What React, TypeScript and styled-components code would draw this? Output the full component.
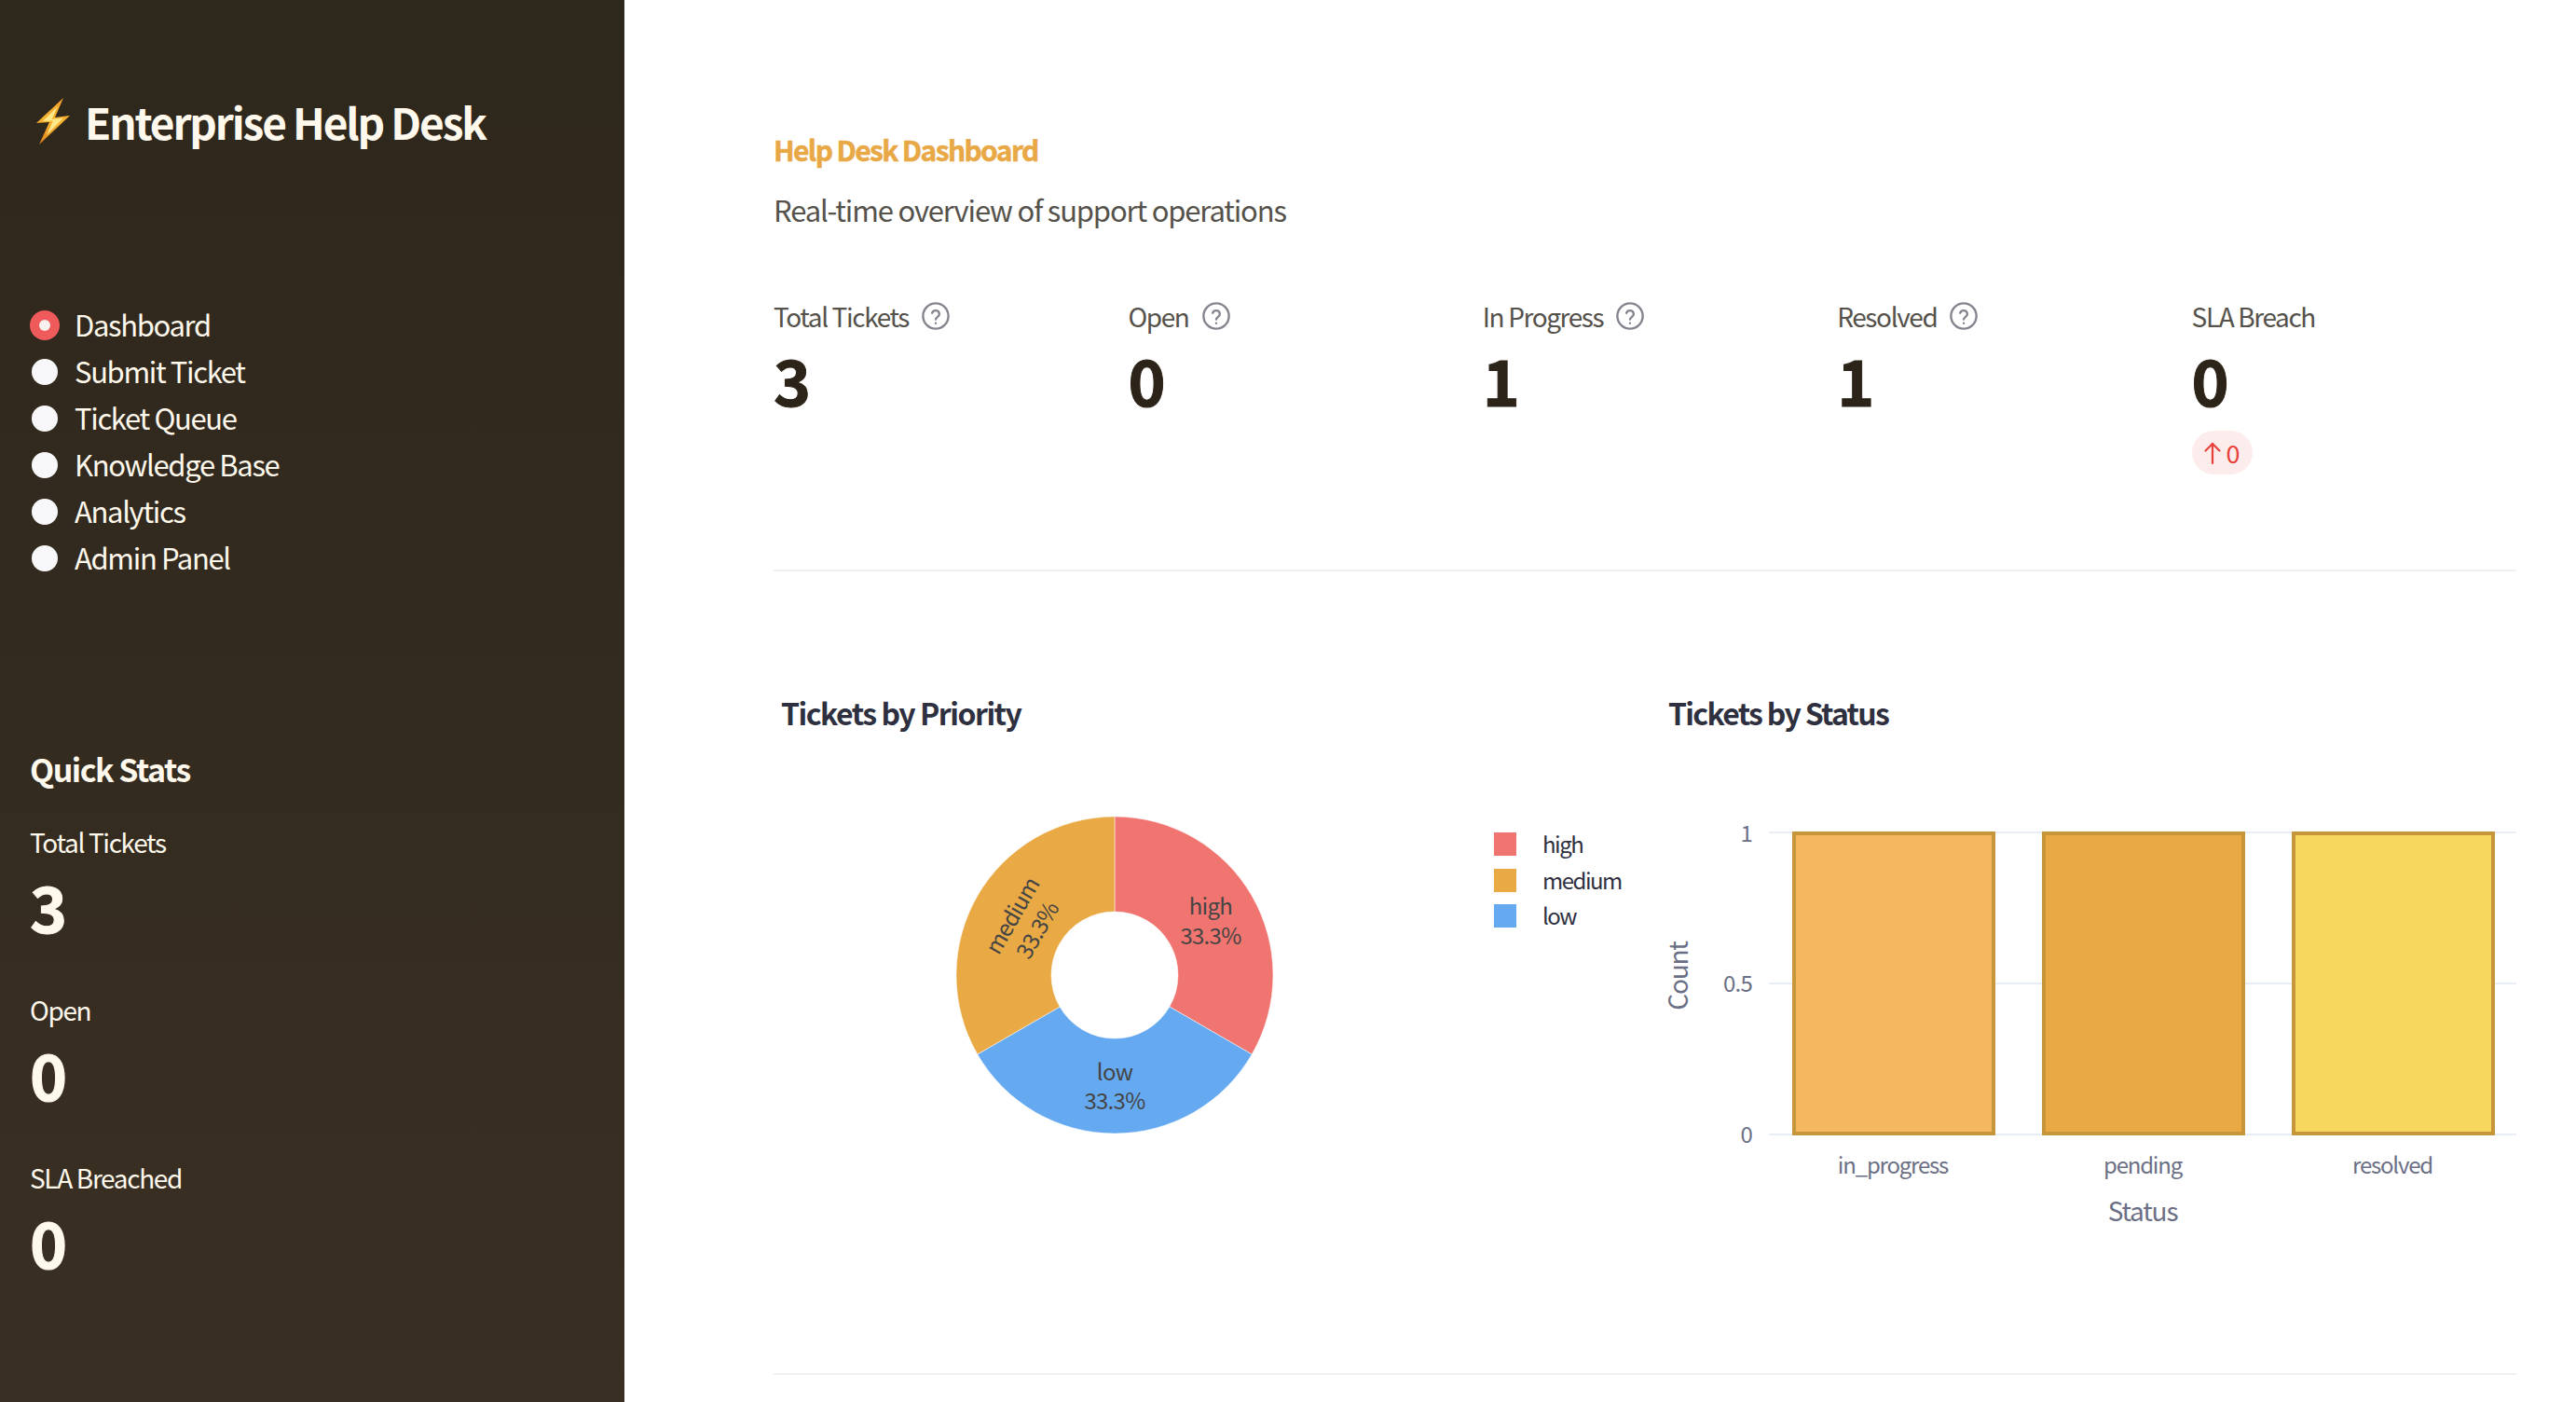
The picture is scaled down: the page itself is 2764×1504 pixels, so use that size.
import styled, { createGlobalStyle } from "styled-components";

const FONT = `"Noto Sans CJK JP", "Noto Sans", sans-serif`;

const GlobalStyle = createGlobalStyle`
  html, body {
    margin: 0;
    padding: 0;
    background: #fff;
    font-family: ${FONT};
  }
  * {
    box-sizing: border-box;
  }
`;

const Page = styled.div`
  display: flex;
  width: 2764px;
  height: 1504px;
  overflow: hidden;
`;

const Sidebar = styled.aside`
  display: flex;
  flex-direction: column;
  flex: 0 0 670px;
  height: 100%;
  padding: 0 32px;
  background: linear-gradient(180deg, #2e271c 0%, #3a2f23 100%);
  color: #fff8ec;
`;

const Brand = styled.div`
  display: flex;
  align-items: center;
  gap: 15px;
  height: 60px;
  margin: 100px 0 0 6px;
`;

const BrandTitle = styled.h1`
  margin: 0;
  font-size: 46px;
  line-height: 60px;
  font-weight: 700;
  letter-spacing: -2.15px;
`;

const NavList = styled.div`
  display: flex;
  flex-direction: column;
  margin-top: 162px;
`;

const NavItem = styled.div`
  display: flex;
  align-items: center;
  height: 50px;
  gap: 16px;
  font-size: 31px;
  letter-spacing: -1.35px;
`;

const Radio = styled.span<{ $active?: boolean }>`
  display: flex;
  align-items: center;
  justify-content: center;
  width: 32px;
  height: 32px;
  margin-top: 4px;
  border-radius: 50%;
  background: ${(p) => (p.$active ? "#ef5b5b" : "#f8f8fb")};
  ${(p) => (p.$active ? "" : "border: 2px solid #332b1f;")}
  &::after {
    content: "";
    display: ${(p) => (p.$active ? "block" : "none")};
    width: 12px;
    height: 12px;
    border-radius: 50%;
    background: #f8f0ec;
  }
`;

const QuickTitle = styled.h2`
  margin: 178px 0 31px;
  font-size: 34px;
  line-height: 50px;
  font-weight: 700;
  letter-spacing: -1.5px;
`;

const QuickStat = styled.div`
  display: flex;
  flex-direction: column;
  height: 180px;
`;

const QuickLabel = styled.div`
  font-size: 28px;
  line-height: 44px;
  letter-spacing: -1.35px;
`;

const QuickValue = styled.div`
  font-size: 68px;
  line-height: 92px;
  font-weight: 700;
  margin-top: 1px;
  -webkit-text-stroke: 1px #fff8ec;
`;

const Main = styled.main`
  display: flex;
  flex-direction: column;
  flex: 1;
  padding: 0 64px 0 160px;
  min-width: 0;
`;

const PageTitle = styled.h1`
  margin: 0;
  margin-top: 138px;
  font-size: 30px;
  line-height: 44px;
  font-weight: 700;
  color: #e8a845;
  letter-spacing: -1.65px;
  -webkit-text-stroke: 0.5px #e8a845;
`;

const Subtitle = styled.p`
  margin: 21px 0 0;
  font-size: 31px;
  line-height: 44px;
  color: #55514b;
  letter-spacing: -1.17px;
`;

const Metrics = styled.div`
  display: grid;
  grid-template-columns: repeat(5, 1fr);
  gap: 32px;
  margin-top: 70px;
  height: 294px;
`;

const Metric = styled.div`
  display: flex;
  flex-direction: column;
  align-items: flex-start;
`;

const MetricLabel = styled.div`
  display: flex;
  align-items: center;
  gap: 14px;
  height: 44px;
  font-size: 28px;
  color: #55514b;
  letter-spacing: -1.4px;
`;

const MetricValue = styled.div`
  font-size: 68px;
  line-height: 92px;
  font-weight: 700;
  color: #2d2419;
  -webkit-text-stroke: 1px #2d2419;
`;

const Delta = styled.div`
  display: flex;
  align-items: center;
  gap: 5px;
  height: 47px;
  padding: 0 13px 0 12px;
  margin-top: 9px;
  border-radius: 24px;
  background: #fdecec;
  color: #e8403a;
  font-size: 27px;
`;

const Divider = styled.hr`
  width: 100%;
  height: 2px;
  margin: 0;
  border: 0;
  background: #f0f0f0;
`;

const Charts = styled.div`
  display: grid;
  grid-template-columns: 1fr 1fr;
  gap: 32px;
  height: 860px;
`;

const ChartSvg = styled.svg`
  display: block;
  width: 919px;
  height: 860px;
  overflow: visible;
  font-family: ${FONT};
`;

const HelpIcon = () => (
  <svg width="30" height="30" viewBox="0 0 24 24" fill="none" stroke="#85858f" strokeWidth="1.9" strokeLinecap="round" strokeLinejoin="round">
    <circle cx="12" cy="12" r="10.9" />
    <path d="M8.9 9.4a3.2 3.2 0 0 1 6.2 1c0 2.1-3.1 2.7-3.1 4.4" />
    <path d="M12 18.2h.01" />
  </svg>
);

const BoltIcon = () => (
  <svg width="38" height="52" viewBox="0 0 38 52">
    <defs>
      <linearGradient id="bolt" x1="0.6" y1="0" x2="0.3" y2="1">
        <stop offset="0" stopColor="#f3a02a" />
        <stop offset="0.5" stopColor="#f8b431" />
        <stop offset="1" stopColor="#e2861c" />
      </linearGradient>
    </defs>
    <path d="M30 1 L1 28 L15 27 L4 51 L37 20 L21 22 Z" fill="url(#bolt)" />
    <path d="M24 10 L8 26 L19 25.5 L12 41 L30 22.5 L17.5 24 Z" fill="#ffe88a" />
  </svg>
);

const ArrowUp = () => (
  <svg width="20" height="26" viewBox="0 0 20 26" fill="none" stroke="#e8403a" strokeWidth="2.2" strokeLinecap="round" strokeLinejoin="round">
    <path d="M10 24V3" />
    <path d="M2.5 10.5L10 3l7.5 7.5" />
  </svg>
);

const navItems = ["Dashboard", "Submit Ticket", "Ticket Queue", "Knowledge Base", "Analytics", "Admin Panel"];
const quickStats = [
  { label: "Total Tickets", value: 3 },
  { label: "Open", value: 0 },
  { label: "SLA Breached", value: 0 },
];
const metrics = [
  { label: "Total Tickets", value: 3, help: true },
  { label: "Open", value: 0, help: true },
  { label: "In Progress", value: 1, help: true },
  { label: "Resolved", value: 1, help: true },
  { label: "SLA Breach", value: 0, help: false },
];

// chart coords are relative to the svg: x - 830 / x - 1781, y - 614
const CX = 366;
const CY = 433;
const R = 170;
const HOLE = 68;

function slicePath(from: number, to: number) {
  const pt = (r: number, a: number) => {
    const rad = (a * Math.PI) / 180;
    return `${(CX + r * Math.sin(rad)).toFixed(2)} ${(CY - r * Math.cos(rad)).toFixed(2)}`;
  };
  return `M${pt(R, from)} A${R} ${R} 0 0 1 ${pt(R, to)} L${pt(HOLE, to)} A${HOLE} ${HOLE} 0 0 0 ${pt(HOLE, from)} Z`;
}

const slices = [
  { name: "high", from: 0, to: 120, color: "#f07470" },
  { name: "low", from: 120, to: 240, color: "#65a9f0" },
  { name: "medium", from: 240, to: 360, color: "#e9a945" },
];

const legend = [
  { name: "high", color: "#f07470", y: 280 },
  { name: "medium", color: "#e9a945", y: 319 },
  { name: "low", color: "#65a9f0", y: 357 },
];

function PieChart() {
  return (
    <ChartSvg viewBox="0 0 919 860">
      <text x="8" y="165" fontSize="32" fontWeight="700" fill="#2e3040" letterSpacing="-1.5">Tickets by Priority</text>
      {slices.map((s) => (
        <path key={s.name} d={slicePath(s.from, s.to)} fill={s.color} stroke="#fff" strokeWidth="0.5" />
      ))}
      <g fontSize="24" fill="#444" textAnchor="middle" letterSpacing="-0.7">
        <text x="469" y="368">high</text>
        <text x="469" y="400">33.3%</text>
        <text x="366" y="546">low</text>
        <text x="366" y="577">33.3%</text>
        <g transform="rotate(-60 270 375)">
          <text x="268" y="369">medium</text>
          <text x="268" y="400">33.3%</text>
        </g>
      </g>
      {legend.map((l) => (
        <g key={l.name}>
          <rect x="773" y={l.y} width="24" height="25" fill={l.color} />
          <text x="825" y={l.y + 22} fontSize="24" fill="#2e3040" letterSpacing="-1.5">{l.name}</text>
        </g>
      ))}
    </ChartSvg>
  );
}

const bars = [
  { name: "in_progress", x: 144, w: 214, color: "#f3b860" },
  { name: "pending", x: 412, w: 214, color: "#e9a945" },
  { name: "resolved", x: 680, w: 214, color: "#f8d75e" },
];

function BarChart() {
  return (
    <ChartSvg viewBox="0 0 919 860">
      <text x="9" y="165" fontSize="32" fontWeight="700" fill="#2e3040" letterSpacing="-1.7">Tickets by Status</text>
      {[280, 442, 604].map((y) => (
        <line key={y} x1="117" x2="919" y1={y} y2={y} stroke="#e9edf5" strokeWidth="2" />
      ))}
      {bars.map((b) => (
        <rect key={b.name} x={b.x} y="281" width={b.w} height="322" fill={b.color} stroke="#c8963a" strokeWidth="4" />
      ))}
      <g fontSize="24" fill="#6b6f85" textAnchor="end" letterSpacing="-0.8">
        <text x="99" y="290">1</text>
        <text x="99" y="451">0.5</text>
        <text x="99" y="613">0</text>
      </g>
      <g fontSize="24" fill="#6b6f85" textAnchor="middle" letterSpacing="-1.2">
        {bars.map((b) => (
          <text key={b.name} x={b.x + b.w / 2 - 1} y="646">{b.name}</text>
        ))}
      </g>
      <text x="518" y="697" fontSize="28" fill="#6b6f85" textAnchor="middle" letterSpacing="-1.2">Status</text>
      <text x="30" y="434" transform="rotate(-90 30 434)" fontSize="28" fill="#6b6f85" textAnchor="middle" letterSpacing="-1.2">Count</text>
    </ChartSvg>
  );
}

export default function App() {
  return (
    <>
      <GlobalStyle />
      <Page>
        <Sidebar>
          <Brand>
            <BoltIcon />
            <BrandTitle>Enterprise Help Desk</BrandTitle>
          </Brand>
          <NavList>
            {navItems.map((item, i) => (
              <NavItem key={item}>
                <Radio $active={i === 0} />
                {item}
              </NavItem>
            ))}
          </NavList>
          <QuickTitle>Quick Stats</QuickTitle>
          {quickStats.map((s) => (
            <QuickStat key={s.label}>
              <QuickLabel>{s.label}</QuickLabel>
              <QuickValue>{s.value}</QuickValue>
            </QuickStat>
          ))}
        </Sidebar>
        <Main>
          <PageTitle>Help Desk Dashboard</PageTitle>
          <Subtitle>Real-time overview of support operations</Subtitle>
          <Metrics>
            {metrics.map((m) => (
              <Metric key={m.label}>
                <MetricLabel>
                  {m.label}
                  {m.help && <HelpIcon />}
                </MetricLabel>
                <MetricValue>{m.value}</MetricValue>
                {!m.help && (
                  <Delta>
                    <ArrowUp />0
                  </Delta>
                )}
              </Metric>
            ))}
          </Metrics>
          <Divider />
          <Charts>
            <PieChart />
            <BarChart />
          </Charts>
          <Divider />
        </Main>
      </Page>
    </>
  );
}
